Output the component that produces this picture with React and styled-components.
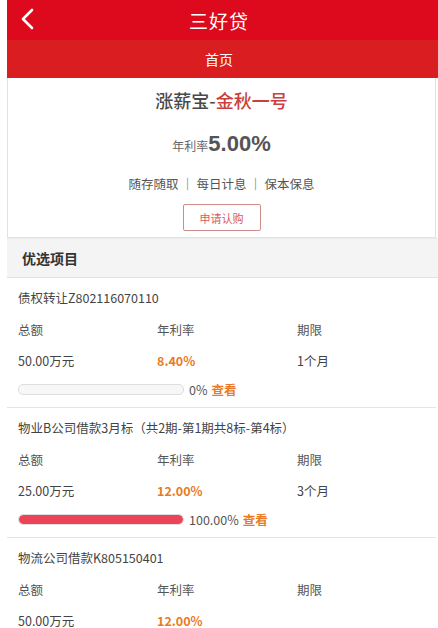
import React from 'react'
import styled, { createGlobalStyle } from 'styled-components'

const GlobalStyle = createGlobalStyle`
  body {
    margin: 0;
    background: #fff;
    font-family: "Noto Sans CJK SC", "Noto Sans", sans-serif;
  }
`

const projects = [
    { name: '债权转让Z802116070110', total: '50.00万元', rate: '8.40%', term: '1个月', progress: 0, label: '0%' },
    { name: '物业B公司借款3月标（共2期-第1期共8标-第4标）', total: '25.00万元', rate: '12.00%', term: '3个月', progress: 100, label: '100.00%' },
    { name: '物流公司借款K805150401', total: '50.00万元', rate: '12.00%', term: '' },
]

function App() {
    return (
        <Wrapper>
            <GlobalStyle />
            <TopBar>
                <BackButton>
                    <svg width="16" height="24" viewBox="0 0 16 24">
                        <path d="M13 3 L4 12 L13 21" fill="none" stroke="#fff" strokeWidth="2.6" strokeLinecap="round" strokeLinejoin="round" />
                    </svg>
                </BackButton>
                <Title>三好贷</Title>
            </TopBar>
            <TabBar>首页</TabBar>

            <Card>
                <ProductName>
                    涨薪宝-<Highlight>金秋一号</Highlight>
                </ProductName>
                <RateLine>
                    <RateLabel>年利率</RateLabel>
                    <RateValue>5.00%</RateValue>
                </RateLine>
                <Features>随存随取 ｜ 每日计息 ｜ 保本保息</Features>
                <ApplyButton>申请认购</ApplyButton>
            </Card>

            <SectionHeader>优选项目</SectionHeader>

            {projects.map(p => (
                <Project key={p.name}>
                    <ProjectName>{p.name}</ProjectName>
                    <InfoGrid>
                        <Label>总额</Label>
                        <Label>年利率</Label>
                        <Label>期限</Label>
                        <Value>{p.total}</Value>
                        <Value $accent>{p.rate}</Value>
                        <Value>{p.term}</Value>
                    </InfoGrid>
                    {p.label && (
                        <ProgressRow>
                            <Track>
                                <Fill style={{ width: `${p.progress}%` }} />
                            </Track>
                            <Percent>{p.label}</Percent>
                            <ViewLink>查看</ViewLink>
                        </ProgressRow>
                    )}
                </Project>
            ))}
        </Wrapper>
    )
}

export default App

const Wrapper = styled.div`
    padding-left: 7px;
    height: 628px;
    overflow: hidden;
`
const TopBar = styled.div`
    position: relative;
    height: 40px;
    background: #dc0a1c;
    display: flex;
    align-items: center;
    justify-content: center;
`
const BackButton = styled.div`
    position: absolute;
    left: 12px;
    top: 7px;
    display: flex;
`
const Title = styled.div`
    color: #fff;
    font-size: 19px;
    letter-spacing: 1px;
    margin-right: 7px;
`
const TabBar = styled.div`
    height: 38px;
    background: #d91d20;
    color: #fff;
    font-size: 14px;
    display: flex;
    align-items: center;
    justify-content: center;
    padding-right: 7px;
`
const Card = styled.div`
    margin-right: 2px;
    border: 1px solid #e2e2e2;
    border-top: none;
    height: 160px;
    box-sizing: border-box;
    display: flex;
    flex-direction: column;
    align-items: center;
    padding-top: 9px;
`
const ProductName = styled.div`
    font-size: 18px;
    font-weight: 500;
    color: #4a4a4a;
    line-height: 26px;
`
const Highlight = styled.span`
    color: #c9403f;
`
const RateLine = styled.div`
    display: flex;
    align-items: baseline;
    margin-top: 17px;
    line-height: 28px;
`
const RateLabel = styled.span`
    font-size: 12px;
    color: #666;
`
const RateValue = styled.span`
    font-family: "Liberation Sans", Arial, sans-serif;
    font-size: 22px;
    font-weight: bold;
    color: #555;
`
const Features = styled.div`
    margin-top: 14px;
    font-size: 12.5px;
    color: #555;
    line-height: 20px;
`
const ApplyButton = styled.div`
    margin-top: 10px;
    width: 78px;
    height: 27px;
    box-sizing: border-box;
    border: 1px solid #cf8a8c;
    border-radius: 2px;
    color: #d65b5e;
    font-size: 11px;
    display: flex;
    align-items: center;
    justify-content: center;
`
const SectionHeader = styled.div`
    height: 40px;
    background: #f4f4f4;
    border-top: 1px solid #ececec;
    border-bottom: 1px solid #e2e2e2;
    box-sizing: border-box;
    display: flex;
    align-items: center;
    padding-left: 15px;
    font-size: 14px;
    font-weight: bold;
    color: #333;
`
const Project = styled.div`
    padding: 10px 0 8px 11px;
    border-bottom: 1px solid #e4e4e4;
    margin-right: 2px;
`
const ProjectName = styled.div`
    font-size: 12.5px;
    color: #444;
    line-height: 20px;
`
const InfoGrid = styled.div`
    display: grid;
    grid-template-columns: 139px 140px auto;
    grid-auto-rows: 31px;
    margin-top: 6px;
    align-items: center;
`
const Label = styled.div`
    font-size: 12.5px;
    color: #555;
`
const Value = styled.div`
    font-size: 12.5px;
    color: ${p => (p.$accent ? '#e97a25' : '#444')};
    font-weight: ${p => (p.$accent ? 'bold' : 'normal')};
`
const ProgressRow = styled.div`
    display: flex;
    align-items: center;
    margin-top: 3px;
    height: 20px;
`
const Track = styled.div`
    width: 164px;
    height: 9px;
    border: 1px solid #dedede;
    border-radius: 5px;
    background: #f7f7f7;
    overflow: hidden;
`
const Fill = styled.div`
    height: 100%;
    background: #ec4358;
    border-radius: 5px;
`
const Percent = styled.span`
    margin-left: 5px;
    font-size: 12.5px;
    color: #555;
`
const ViewLink = styled.span`
    margin-left: 4px;
    font-size: 12.5px;
    font-weight: bold;
    color: #e97a25;
`
